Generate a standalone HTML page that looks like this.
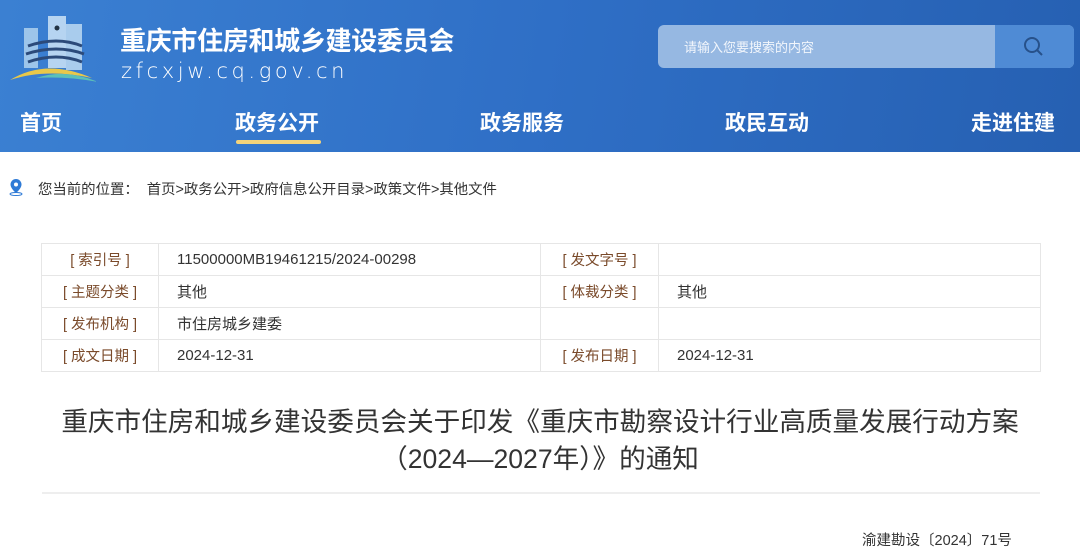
<!DOCTYPE html>
<html><head><meta charset="utf-8"><style>
*{margin:0;padding:0;box-sizing:border-box}
body{width:1080px;height:553px;overflow:hidden;background:#fff;font-family:"Liberation Sans","Noto Sans CJK SC",sans-serif;position:relative}
.hd{position:absolute;left:0;top:0;width:1080px;height:152px;background:linear-gradient(100deg,#3b80d2 0%,#2f6fc6 50%,#2660b2 100%)}
.t1{position:absolute;left:120px;top:21px;color:#fff;font-size:26px;font-weight:bold;letter-spacing:-0.3px}
.t2{position:absolute;left:121px;top:59px;color:#fff;font-size:21px;letter-spacing:3.6px;font-family:"DejaVu Sans",sans-serif;font-weight:300}
.sr{position:absolute;left:658px;top:25px;width:416px;height:43px;border-radius:6px;background:#96b8e2;overflow:hidden}
.sr span{position:absolute;left:26px;top:12px;color:#f2f6fc;font-size:13px}
.sr .b{position:absolute;right:0;top:0;width:79px;height:43px;background:#4f8bd5}
.nav{position:absolute;top:107px;color:#fff;font-size:21px;font-weight:bold}
.ul{position:absolute;left:236px;top:140px;width:85px;height:4px;border-radius:2px;background:#f4d37a}
.bc{position:absolute;left:38px;top:178px;font-size:14.4px;color:#333}
table{position:absolute;left:41px;top:243px;width:1000px;border-collapse:collapse;font-size:15px}
td{border:1px solid #e6e6e6;height:32px;color:#333;padding-left:18px}
td.l{color:#7a4a2a;text-align:center;padding:0;font-size:14.5px}
h1{position:absolute;left:0;top:404px;width:1080px;text-align:center;font-weight:normal;font-size:26.6px;line-height:37px;color:#333}
.hr{position:absolute;left:42px;top:492px;width:998px;height:2px;background:#eee}
.no{position:absolute;left:862px;top:529px;font-size:14.5px;color:#333}
</style></head><body>
<div class="hd">
<svg style="position:absolute;left:6px;top:14px" width="90" height="70" viewBox="0 0 90 70">
<rect x="18" y="14" width="14" height="40" fill="#a9cdec" opacity=".9"/>
<rect x="42" y="2" width="18" height="52" fill="#c4def4" opacity=".9"/>
<rect x="60" y="10" width="16" height="46" fill="#b6d5ef" opacity=".9"/>
<circle cx="51" cy="14" r="2.5" fill="#234"/>
<path d="M22 32 Q51 22 76 32" stroke="#2b4a7a" stroke-width="3" fill="none"/>
<path d="M20 40 Q51 30 78 40" stroke="#2b4a7a" stroke-width="3" fill="none"/>
<path d="M22 48 Q51 38 76 48" stroke="#2b4a7a" stroke-width="3" fill="none"/>
<path d="M4 66 Q40 44 86 64 Q40 54 4 66Z" fill="#e9c84a"/>
<path d="M30 64 Q60 54 92 68 Q60 62 30 64Z" fill="#5cc0b8"/>
</svg>
<div class="t1">重庆市住房和城乡建设委员会</div>
<div class="t2">zfcxjw.cq.gov.cn</div>
<div class="sr"><span>请输入您要搜索的内容</span><div class="b">
<svg style="position:absolute;left:28px;top:11px" width="22" height="22" viewBox="0 0 22 22"><circle cx="9" cy="9" r="7" stroke="#27518a" stroke-width="2" fill="none"/><path d="M14 14l5 5" stroke="#27518a" stroke-width="2"/></svg></div></div>
<div class="nav" style="left:20px">首页</div>
<div class="nav" style="left:235px">政务公开</div>
<div class="nav" style="left:480px">政务服务</div>
<div class="nav" style="left:725px">政民互动</div>
<div class="nav" style="left:971px">走进住建</div>
<div class="ul"></div>
</div>
<svg style="position:absolute;left:8px;top:178px" width="16" height="18" viewBox="0 0 16 18"><path d="M8 1a5.5 5.5 0 0 0-5.5 5.5c0 4 5.5 8.5 5.5 8.5s5.5-4.5 5.5-8.5A5.5 5.5 0 0 0 8 1z" fill="#2e7ad6"/><circle cx="8" cy="6.5" r="2" fill="#fff"/><ellipse cx="8" cy="16" rx="6" ry="1.5" fill="none" stroke="#2e7ad6"/></svg>
<div class="bc">您当前的位置：&nbsp; 首页&gt;政务公开&gt;政府信息公开目录&gt;政策文件&gt;其他文件</div>
<table>
<tr><td class="l" style="width:117px">[ 索引号 ]</td><td style="width:382px">11500000MB19461215/2024-00298</td><td class="l" style="width:118px">[ 发文字号 ]</td><td></td></tr>
<tr><td class="l">[ 主题分类 ]</td><td>其他</td><td class="l">[ 体裁分类 ]</td><td>其他</td></tr>
<tr><td class="l">[ 发布机构 ]</td><td>市住房城乡建委</td><td class="l"></td><td></td></tr>
<tr><td class="l">[ 成文日期 ]</td><td>2024-12-31</td><td class="l">[ 发布日期 ]</td><td>2024-12-31</td></tr>
</table>
<h1>重庆市住房和城乡建设委员会关于印发《重庆市勘察设计行业高质量发展行动方案<br>（2024—2027年）》的通知</h1>
<div class="hr"></div>
<div class="no">渝建勘设〔2024〕71号</div>
</body></html>
